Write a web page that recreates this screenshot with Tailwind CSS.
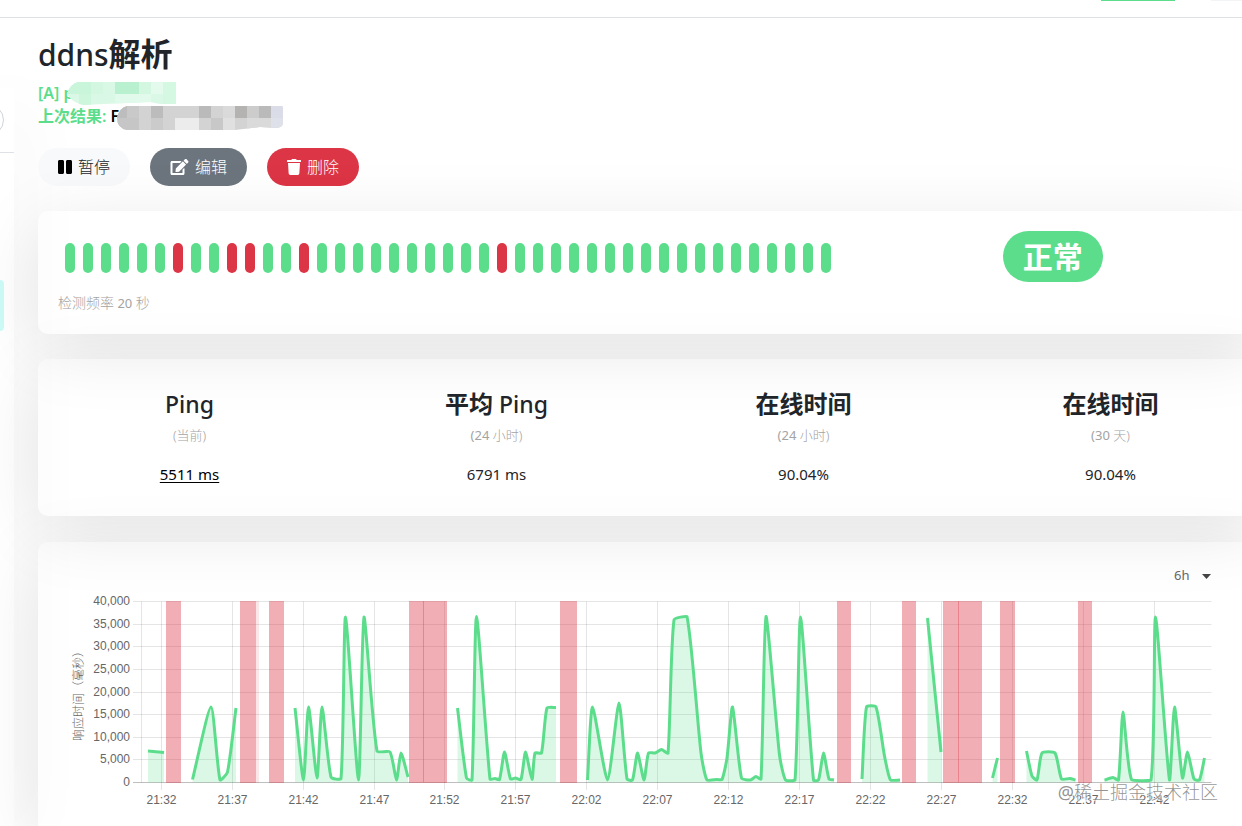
<!DOCTYPE html>
<html lang="zh-CN">
<head>
<meta charset="utf-8">
<meta name="viewport" content="width=device-width, initial-scale=1">
<title>ddns解析</title>
<script src="https://cdn.jsdelivr.net/npm/@tailwindcss/browser@4"></script>
</head>
<body class="relative flex min-h-screen flex-col overflow-x-hidden bg-white font-['Noto_Sans','Noto_Sans_CJK_SC',sans-serif] text-base text-[#212529]">
<header class="flex h-[18px] shrink-0 items-start justify-end gap-9 border-b border-[#dee2e6]">
  <div class="h-px w-[74px] bg-[#5cdd8b]"></div>
  <div class="h-px w-[31px] bg-gray-100"></div>
</header>
<div class="flex grow gap-6">
  <aside class="mt-[70px] w-[14px] shrink-0 shadow-[0_15px_70px_rgba(0,0,0,0.1)]">
    <div class="h-[65px] overflow-hidden border-b border-[#dee2e6] pt-4">
      <div class="-ml-6 h-8 w-7 rounded-r-full border border-[#ced4da]"></div>
    </div>
    <div class="mt-[127px] h-[51px] w-1 rounded-r bg-[#cdfcf8]"></div>
  </aside>

  <main class="-mr-5 flex min-w-0 grow flex-col">
    <h1 class="mt-[17px] text-[30px] leading-[38px] font-medium">ddns<span class="text-[32px] font-bold">解析</span></h1>
    <p class="relative mt-2 h-[23px] leading-[23px] font-semibold text-[#5cdd8b]">
      <a href="#">[A] p</a>
      <svg class="absolute top-0 left-[29px] h-6 w-[109px]" viewBox="67 82 109 24" aria-hidden="true">
        <clipPath id="hostClip"><path d="M78 82H176V104H160L150 102L104 104L84 105Q72 103 67 94Q70 84 78 82Z"/></clipPath>
        <g clip-path="url(#hostClip)">
          <rect x="67" y="82" width="109" height="24" fill="#d9f8e5"/>
          <rect x="67" y="82" width="24" height="12" fill="#c9f5da"/>
          <rect x="91" y="82" width="12" height="12" fill="#d3f7e0"/>
          <rect x="115" y="82" width="24" height="12" fill="#b9f1d0"/>
          <rect x="139" y="82" width="12" height="12" fill="#d3f7e1"/>
          <rect x="151" y="82" width="12" height="12" fill="#e3faec"/>
          <rect x="163" y="82" width="13" height="24" fill="#d4f8e2"/>
          <rect x="79" y="94" width="12" height="12" fill="#cdf6dd"/>
          <rect x="115" y="94" width="36" height="12" fill="#e2faeb"/>
        </g>
      </svg>
    </p>
    <p class="relative h-[23px] leading-[23px] font-semibold"><span class="text-[#5cdd8b]">上次结果:</span> <span class="text-black">F</span>
      <svg class="absolute top-px left-[79px] h-6 w-[166px]" viewBox="117 106 166 24" aria-hidden="true">
        <clipPath id="resultClip"><path d="M127 106H281Q283 106 283 108V123Q283 127 277 128L260 127L235 130H127Q117 128 117 118Q119 108 127 106Z"/></clipPath>
        <g clip-path="url(#resultClip)">
          <rect x="117" y="106" width="166" height="24" fill="#d3d3d3"/>
          <rect x="117" y="106" width="10" height="12" fill="#bdbdbd"/>
          <rect x="127" y="106" width="12" height="12" fill="#c9c9c9"/>
          <rect x="151" y="106" width="12" height="12" fill="#bcbcbc"/>
          <rect x="199" y="106" width="12" height="12" fill="#bababa"/>
          <rect x="223" y="106" width="12" height="12" fill="#dadada"/>
          <rect x="235" y="106" width="12" height="12" fill="#b5b2b2"/>
          <rect x="247" y="106" width="12" height="12" fill="#cccccc"/>
          <rect x="259" y="106" width="12" height="12" fill="#bababa"/>
          <rect x="271" y="106" width="12" height="12" fill="#dadde7"/>
          <rect x="117" y="118" width="22" height="12" fill="#c6c6c6"/>
          <rect x="151" y="118" width="12" height="12" fill="#cbcbcb"/>
          <rect x="175" y="118" width="24" height="12" fill="#ececec"/>
          <rect x="211" y="118" width="12" height="12" fill="#c8c8c8"/>
          <rect x="223" y="118" width="12" height="12" fill="#e0e0e0"/>
          <rect x="247" y="118" width="24" height="12" fill="#dadada"/>
          <rect x="271" y="118" width="12" height="12" fill="#dee0ea"/>
        </g>
      </svg>
    </p>
    <div class="mt-5 flex gap-5">
      <button class="flex h-[38px] items-center gap-1.5 rounded-full bg-[#f8f9fa] px-5 font-light">
        <svg class="h-4 w-3.5" viewBox="0 0 448 512" fill="#000" aria-hidden="true"><path d="M144 479H48c-26.500 0-48-21.500-48-48V79c0-26.500 21.500-48 48-48h96c26.500 0 48 21.500 48 48v352c0 26.500-21.500 48-48 48zm304-48V79c0-26.500-21.500-48-48-48h-96c-26.500 0-48 21.500-48 48v352c0 26.500 21.500 48 48 48h96c26.500 0 48-21.500 48-48z"/></svg>暂停</button>
      <button class="flex h-[38px] items-center gap-1.5 rounded-full bg-[#6c757d] px-5 font-light text-white">
        <svg class="h-4 w-[19px]" viewBox="0 0 576 512" fill="currentColor" aria-hidden="true"><path d="M402.600 83.200l90.200 90.200c3.800 3.800 3.800 10 0 13.800L274.400 405.600l-92.800 10.300c-12.400 1.400-22.900-9.100-21.500-21.500l10.300-92.800L388.800 83.200c3.800-3.800 10-3.800 13.800 0zm162-22.900l-48.800-48.800c-15.200-15.200-39.900-15.200-55.200 0l-35.400 35.400c-3.800 3.800-3.800 10 0 13.800l90.200 90.200c3.800 3.800 10 3.800 13.800 0l35.400-35.400c15.200-15.300 15.200-40 0-55.200zM384 346.200V448H64V128h229.800c3.200 0 6.200-1.300 8.500-3.500l40-40c7.600-7.600 2.200-20.500-8.500-20.500H48C21.500 64 0 85.500 0 112v352c0 26.500 21.500 48 48 48h352c26.500 0 48-21.500 48-48V306.200c0-10.700-12.900-16-20.500-8.500l-40 40c-2.200 2.300-3.500 5.300-3.500 8.500z"/></svg>编辑</button>
      <button class="flex h-[38px] items-center gap-1.5 rounded-full bg-[#dc3545] px-5 font-light text-white">
        <svg class="h-4 w-3.5" viewBox="0 0 448 512" fill="currentColor" aria-hidden="true"><path d="M432 32H312l-9.400-18.700A24 24 0 0 0 281.100 0H166.800a23.720 23.720 0 0 0-21.400 13.300L136 32H16A16 16 0 0 0 0 48v32a16 16 0 0 0 16 16h416a16 16 0 0 0 16-16V48a16 16 0 0 0-16-16zM53.200 467a48 48 0 0 0 47.900 45h245.800a48 48 0 0 0 47.900-45L416 128H32z"/></svg>删除</button>
    </div>

    <section class="mt-[25px] rounded-[10px] p-5 shadow-[0_15px_70px_rgba(0,0,0,0.1)]">
      <div class="-mx-3 grid grid-cols-[2fr_1fr]">
        <div class="px-3">
          <div id="beats" class="flex gap-2 px-[7px] pt-3 pb-5"></div>
          <p class="h-[21px] text-[13px] leading-5 text-[#a3a3a3]"><span class="text-sm leading-5 font-light">检测频率</span> 20 <span class="text-sm leading-5 font-light">秒</span></p>
        </div>
        <div class="h-[51px] text-center">
          <span class="inline-flex h-[51px] items-center rounded-full bg-[#5cdd8b] px-5 text-[30px] font-bold text-white">正常</span>
        </div>
      </div>
    </section>

    <section class="mt-[25px] rounded-[10px] p-5 shadow-[0_15px_70px_rgba(0,0,0,0.1)]">
      <div class="-mx-[22px] grid grid-cols-4 pt-[11px] pb-2.5 text-center">
        <div>
          <h4 class="h-[29px] text-[23px] leading-[29px] font-medium">Ping</h4>
          <p class="mt-1.5 h-[21px] text-[13px] leading-[21px] font-light text-[#a3a3a3]">(当前)</p>
          <p class="mt-4 text-[15px] leading-6"><a href="#" class="text-black underline underline-offset-2">5511 ms</a></p>
        </div>
        <div>
          <h4 class="h-[29px] text-[23px] leading-[29px] font-medium"><span class="text-2xl leading-[28px] font-bold">平均</span> Ping</h4>
          <p class="mt-1.5 h-[21px] text-[13px] leading-[21px] font-light text-[#a3a3a3]"><span class="font-normal">(24</span> 小时)</p>
          <p class="mt-4 text-[15px] leading-6">6791 ms</p>
        </div>
        <div>
          <h4 class="h-[29px] text-2xl leading-[28px] font-bold">在线时间</h4>
          <p class="mt-1.5 h-[21px] text-[13px] leading-[21px] font-light text-[#a3a3a3]"><span class="font-normal">(24</span> 小时)</p>
          <p class="mt-4 text-[15px] leading-6">90.04%</p>
        </div>
        <div>
          <h4 class="h-[29px] text-2xl leading-[28px] font-bold">在线时间</h4>
          <p class="mt-1.5 h-[21px] text-[13px] leading-[21px] font-light text-[#a3a3a3]"><span class="font-normal">(30</span> 天)</p>
          <p class="mt-4 text-[15px] leading-6">90.04%</p>
        </div>
      </div>
    </section>

    <section class="mt-[26px] grow rounded-t-[10px] px-5 pt-5 shadow-[0_15px_70px_rgba(0,0,0,0.1)]">
      <div class="flex h-7 items-center justify-end pr-[31px]">
        <select aria-label="时间范围" class="w-[37px] appearance-none text-[13px] text-[#666666]"><option>6h</option><option>24h</option></select>
        <svg class="pointer-events-none -ml-[9px] h-[5px] w-[9px]" viewBox="0 0 9 5" aria-hidden="true"><path d="M0 0H9L4.500 5Z" fill="#444"/></svg>
      </div>
      <svg id="chart" class="block w-full font-['Liberation_Sans','Noto_Sans_CJK_SC',sans-serif]" viewBox="58 590 1184 236" role="img" aria-label="响应时间（毫秒）"></svg>
    </section>
  </main>
</div>
<div class="absolute right-6 bottom-5 text-lg text-[#777777]/80 [text-shadow:1px_1px_1px_#fff]">@<span class="font-light">稀土掘金技术社区</span></div>

<script>
  const down = [6, 9, 10, 13, 24];
  document.getElementById('beats').innerHTML = Array.from({ length: 43 }, (_, i) =>
    `<div class="h-[30px] w-2.5 shrink-0 rounded-full ${down.includes(i) ? 'bg-[#dc3545]' : 'bg-[#5cdd8b]'}"></div>`).join('');

  const left = 141.5, right = 1211.5, top0 = 601.5, base = 782.5;
  const series = [
    [[148,751],[164,752.5]],
    [[192.5,779.5],[211,707],[220,780],[227.500,772],[236,708]],
    [[295,708],[303.500,780],[308.500,707],[317,778],[322,707],[331,777],[341,778.5],[345.500,617],[358.500,780],[364,617],[377,751],[390,752],[396.500,780],[401,753],[408,777]],
    [[457.500,708],[466.500,778],[472,780],[476.500,616.5],[490,779],[495,778.5],[499.500,779.5],[504.500,752],[510.500,779],[515.500,778],[521,779.5],[525.500,752],[532,779.5],[535,753],[541.500,753],[547,708],[556,707.5]],
    [[587.500,780],[592.500,707],[607.500,780],[619,703],[627,779],[632.500,780],[637.500,753],[644,780],[648.500,753],[655,753],[661.500,749.5],[668,753],[674,620],[687,616.5],[701,753],[707,780],[717,779.5],[722,779.5],[727,758],[732.500,707],[741.500,778],[750.500,780],[756,776.5],[761,779],[766,616.5],[779.500,755],[785.500,780],[795,780],[800.500,617],[813.500,780],[818.500,780],[823.500,753],[829,779],[834,780]],
    [[862,779],[866.500,707],[876,707],[884.500,756],[890.500,780],[900,780]],
    [[927.500,618],[941,752]],
    [[992.500,778],[997.500,758]],
    [[1026.500,751],[1032,776],[1037,780],[1042,753],[1055,753],[1061.500,779],[1070,778.5],[1075.500,780]],
    [[1104.500,780],[1113,777.5],[1118.500,780],[1123,712],[1131.500,779.5],[1151,780],[1155.500,617],[1169.500,780],[1174.500,707],[1182.500,778],[1187.500,752],[1194,779],[1199.500,780],[1204.500,758]]
  ];
  const bands = [[166,181],[240,256],[269,284],[409,447],[560,577],[837,851],[902,916],[943,982],[1000,1015],[1078,1092]];

  // Spline with tension 0.2; control points stay inside the plot area.
  function curve(p) {
    const clamp = y => Math.min(781, Math.max(616, y));
    const cp = p.map((c, i) => {
      const a = p[Math.max(i - 1, 0)], b = p[Math.min(i + 1, p.length - 1)];
      const d1 = Math.hypot(c[0] - a[0], c[1] - a[1]), d2 = Math.hypot(b[0] - c[0], b[1] - c[1]);
      const f1 = 0.2 * d1 / (d1 + d2), f2 = 0.2 * d2 / (d1 + d2);
      return [c[0] - f1 * (b[0] - a[0]), clamp(c[1] - f1 * (b[1] - a[1])), c[0] + f2 * (b[0] - a[0]), clamp(c[1] + f2 * (b[1] - a[1]))];
    });
    let d = `M${p[0]}`;
    for (let i = 1; i < p.length; i++) d += `C${cp[i - 1][2]},${cp[i - 1][3]} ${cp[i][0]},${cp[i][1]} ${p[i]}`;
    return d;
  }

  let out = '';
  for (let i = 0; i <= 8; i++) {
    const y = Math.round(top0 + (base - top0) * i / 8 - 0.5) + 0.5;
    out += `<path d="M133 ${y}H${right}" stroke="#000" stroke-opacity="${i === 8 ? 0.25 : 0.1}"/>`;
    out += `<text x="130" y="${y + 3}" text-anchor="end">${(40000 - i * 5000).toLocaleString('en-US')}</text>`;
  }
  out += `<path d="M${left} ${top0}V${base}" stroke="#000" stroke-opacity="0.1"/>`;
  for (let i = 0; i < 15; i++) {
    const x = Math.floor(161.3 + i * 70.92) + 0.5;
    const m = 32 + i * 5;
    out += `<path d="M${x} ${top0}V790" stroke="#000" stroke-opacity="0.1"/>`;
    out += `<text x="${x}" y="804" text-anchor="middle">${21 + Math.floor(m / 60)}:${String(m % 60).padStart(2, '0')}</text>`;
  }
  for (const [a, b] of bands) out += `<rect x="${a}" y="601" width="${b - a}" height="182" fill="#dc3545" fill-opacity="0.4"/>`;
  out += `<rect x="256" y="601" width="3" height="182" fill="#dc3545" fill-opacity="0.12"/>`;
  out += `<path d="M423.500 601V782M958.500 601V782" stroke="#dc3545" stroke-opacity="0.35"/>`;
  for (const s of series) {
    const d = curve(s);
    out += `<path d="${d}L${s[s.length - 1][0]},${base}L${s[0][0]},${base}Z" fill="#5cdd8b" fill-opacity="0.22"/>`;
    out += `<path d="${d}" fill="none" stroke="#5cdd8b" stroke-width="3" stroke-linejoin="round"/>`;
  }
  out += `<text transform="translate(83 693) rotate(-90)" text-anchor="middle" font-weight="300">响应时间（毫秒）</text>`;
  document.getElementById('chart').innerHTML = `<g font-size="12" fill="#666">${out}</g>`;
</script>
</body>
</html>
